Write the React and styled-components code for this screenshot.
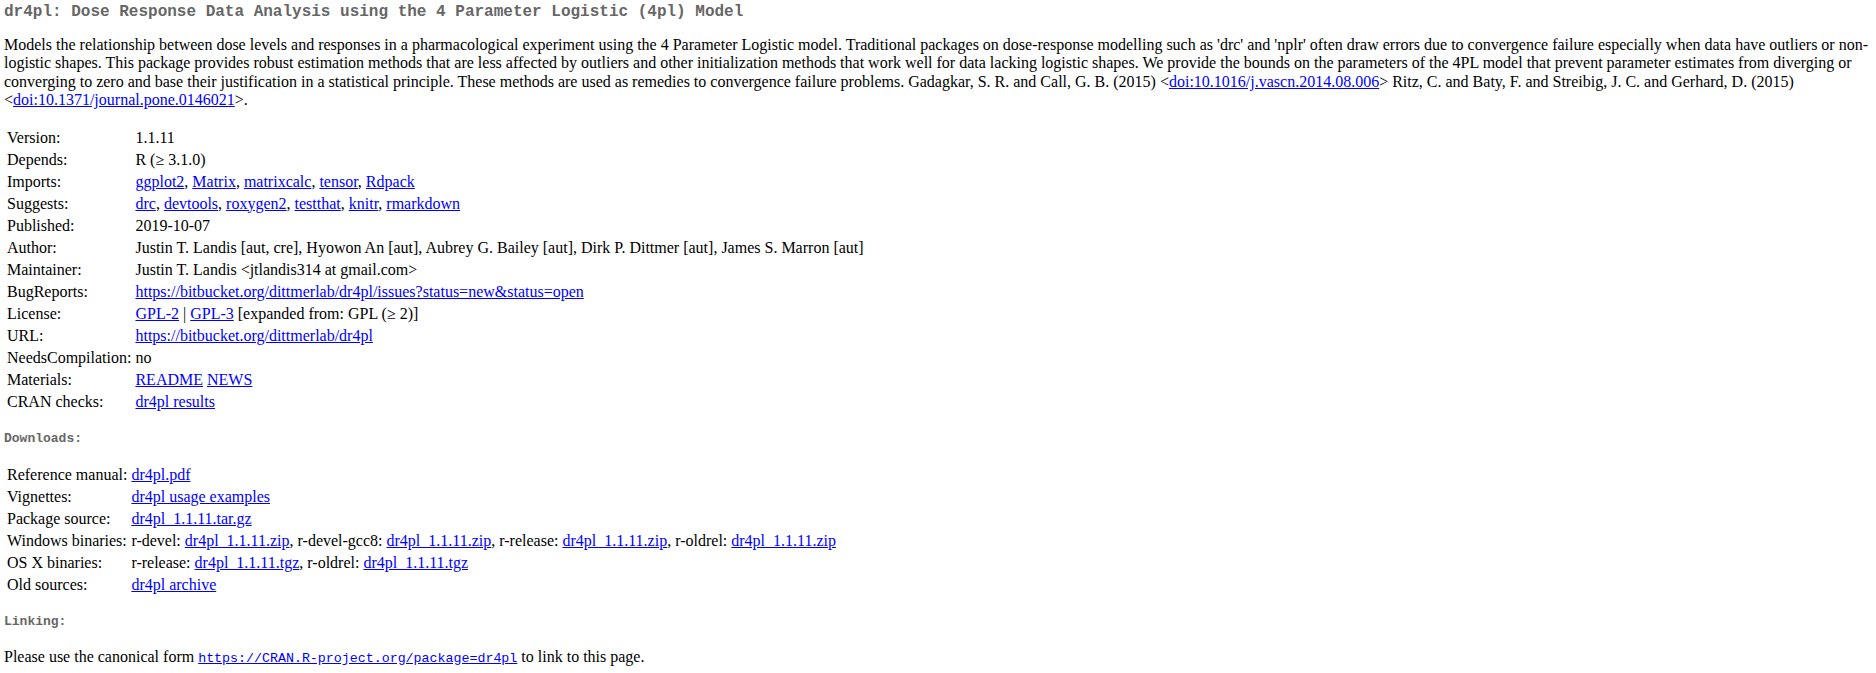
import React from 'react'
import styled, { createGlobalStyle } from 'styled-components'

const GlobalStyle = createGlobalStyle`
  body {
    margin: 0;
    background: white;
    color: black;
    font-family: "Liberation Serif", "Times New Roman", serif;
    font-size: 16px;
  }
`

const Page = styled.div`
  padding: 0 4px;
`

const Title = styled.h2`
  margin: 3px 0 0;
  font-family: "Liberation Mono", "Courier New", monospace;
  font-size: 16px;
  line-height: 18px;
  font-weight: bold;
  color: #666;
`

const Description = styled.p`
  margin: 15px 0 0;
  line-height: 18.4px;
`

const InfoTable = styled.table`
  margin-top: ${p => p.$top}px;
  border-spacing: 2px;
  border-collapse: separate;
  font-size: 16px;

  td {
    padding: 1px;
    line-height: 18px;
    white-space: nowrap;
    vertical-align: middle;
  }
`

const SectionHeading = styled.h4`
  margin: ${p => p.$top}px 0 0;
  font-family: "Liberation Mono", "Courier New", monospace;
  font-size: 13px;
  line-height: 15px;
  font-weight: bold;
  color: #666;
`

const Link = styled.a`
  color: blue;
  text-decoration: underline;
`

const Code = styled.code`
  font-family: "Liberation Mono", "Courier New", monospace;
  font-size: 13.3px;
`

const Footer = styled.p`
  margin: 19px 0 0;
  line-height: 18.4px;
`

const join = (items) =>
  items.map((name, i) => (
    <React.Fragment key={name + i}>
      {i > 0 && ', '}
      <Link href="#">{name}</Link>
    </React.Fragment>
  ))

const summary = [
  ['Version:', '1.1.11'],
  ['Depends:', 'R (\u2265 3.1.0)'],
  ['Imports:', join(['ggplot2', 'Matrix', 'matrixcalc', 'tensor', 'Rdpack'])],
  ['Suggests:', join(['drc', 'devtools', 'roxygen2', 'testthat', 'knitr', 'rmarkdown'])],
  ['Published:', '2019-10-07'],
  ['Author:', 'Justin T. Landis [aut, cre], Hyowon An [aut], Aubrey G. Bailey [aut], Dirk P. Dittmer [aut], James S. Marron [aut]'],
  ['Maintainer:', 'Justin T. Landis <jtlandis314 at gmail.com>'],
  ['BugReports:', <Link href="#">https://bitbucket.org/dittmerlab/dr4pl/issues?status=new&amp;status=open</Link>],
  ['License:', <><Link href="#">GPL-2</Link> | <Link href="#">GPL-3</Link> [expanded from: GPL (&ge; 2)]</>],
  ['URL:', <Link href="#">https://bitbucket.org/dittmerlab/dr4pl</Link>],
  ['NeedsCompilation:', 'no'],
  ['Materials:', <><Link href="#">README</Link> <Link href="#">NEWS</Link></>],
  ['CRAN checks:', <Link href="#">dr4pl results</Link>],
]

const zip = 'dr4pl_1.1.11.zip'
const tgz = 'dr4pl_1.1.11.tgz'

const downloads = [
  ['Reference manual:', <Link href="#">dr4pl.pdf</Link>],
  ['Vignettes:', <Link href="#">dr4pl usage examples</Link>],
  ['Package source:', <Link href="#">dr4pl_1.1.11.tar.gz</Link>],
  ['Windows binaries:', <>r-devel: <Link href="#">{zip}</Link>, r-devel-gcc8: <Link href="#">{zip}</Link>, r-release: <Link href="#">{zip}</Link>, r-oldrel: <Link href="#">{zip}</Link></>],
  ['OS X binaries:', <>r-release: <Link href="#">{tgz}</Link>, r-oldrel: <Link href="#">{tgz}</Link></>],
  ['Old sources:', <Link href="#">dr4pl archive</Link>],
]

const Rows = ({ rows }) => (
  <tbody>
    {rows.map(([label, value]) => (
      <tr key={label}>
        <td>{label}</td>
        <td>{value}</td>
      </tr>
    ))}
  </tbody>
)

const App = () => (
  <Page>
    <GlobalStyle />
    <Title>dr4pl: Dose Response Data Analysis using the 4 Parameter Logistic (4pl) Model</Title>
    <Description>
      Models the relationship between dose levels and responses in a pharmacological experiment using the 4 Parameter Logistic model. Traditional packages on dose-response modelling such as 'drc' and 'nplr' often draw errors due to convergence failure especially when data have outliers or non-logistic shapes. This package provides robust estimation methods that are less affected by outliers and other initialization methods that work well for data lacking logistic shapes. We provide the bounds on the parameters of the 4PL model that prevent parameter estimates from diverging or converging to zero and base their justification in a statistical principle. These methods are used as remedies to convergence failure problems. Gadagkar, S. R. and Call, G. B. (2015) &lt;<Link href="#">doi:10.1016/j.vascn.2014.08.006</Link>&gt; Ritz, C. and Baty, F. and Streibig, J. C. and Gerhard, D. (2015) &lt;<Link href="#">doi:10.1371/journal.pone.0146021</Link>&gt;.
    </Description>
    <InfoTable $top={16}>
      <Rows rows={summary} />
    </InfoTable>
    <SectionHeading $top={17}>Downloads:</SectionHeading>
    <InfoTable $top={17}>
      <Rows rows={downloads} />
    </InfoTable>
    <SectionHeading $top={17}>Linking:</SectionHeading>
    <Footer>
      Please use the canonical form <Link href="#"><Code>https://CRAN.R-project.org/package=dr4pl</Code></Link> to link to this page.
    </Footer>
  </Page>
)

export default App
